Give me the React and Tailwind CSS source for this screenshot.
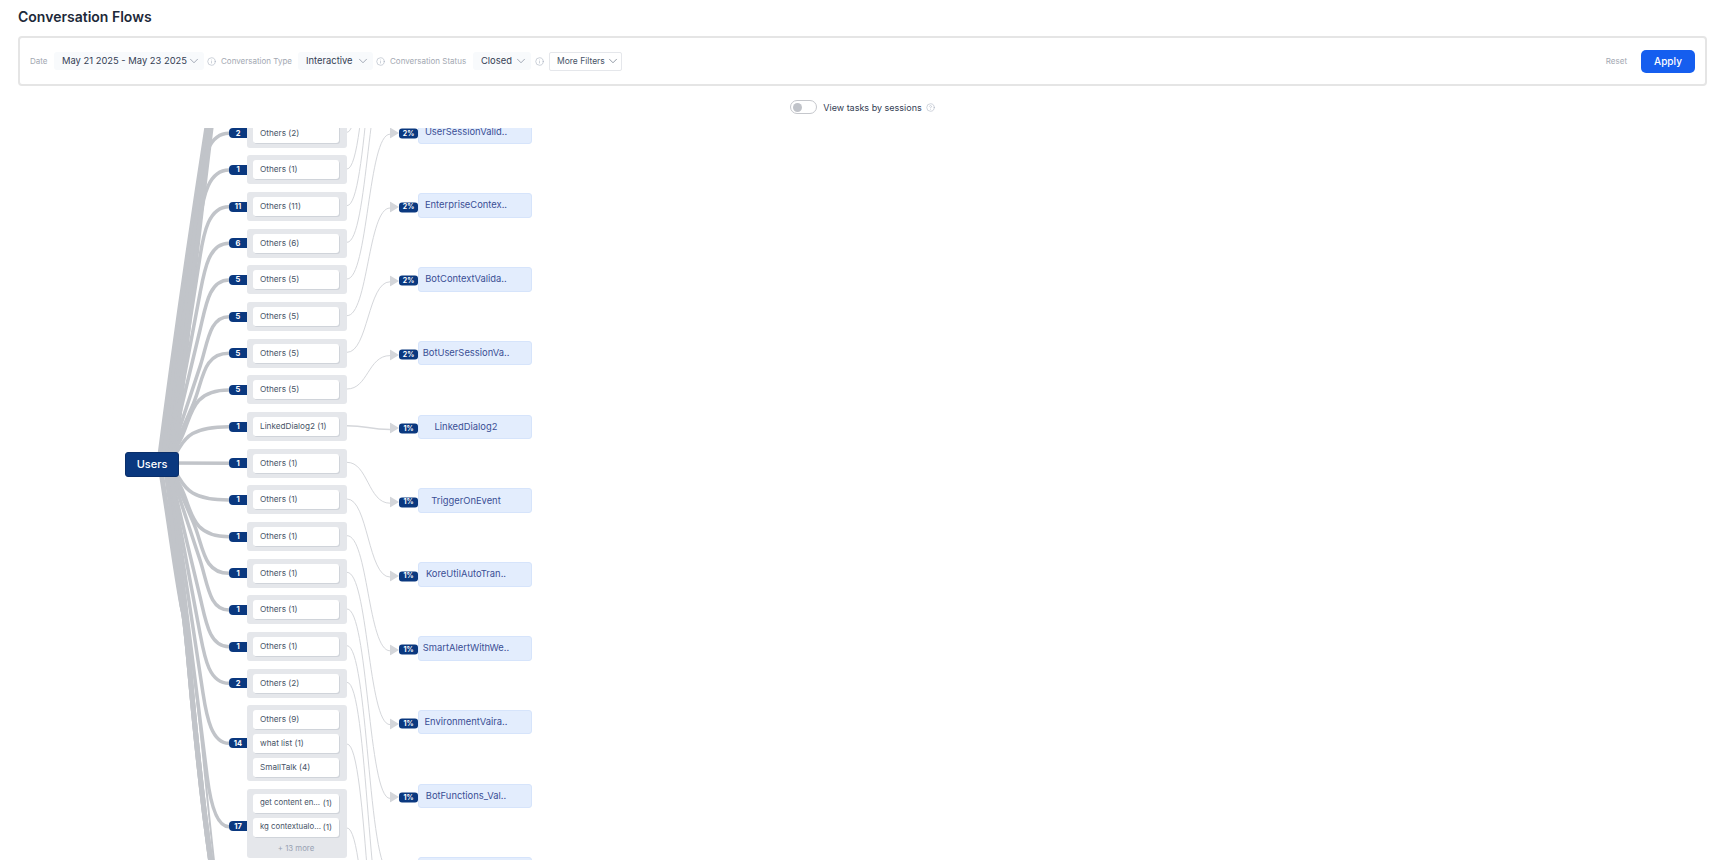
import React from 'react';
import { ChevronDown, Info, CircleHelp } from 'lucide-react';

const NODE_X = 229;
const EDGE_Y = 463;

// row centres of the count column, pixel values on the page
const rowY = [...Array(16)].map((_, i) => 133.3 + 36.67 * i);
const nodeY = i => 133.2 + 73.8 * i;

// Users -> count badge: runs straight out of the box, then a short elbow into the badge
function userEdge(y1) {
  const d = y1 - EDGE_Y;
  const abs = Math.abs(d);
  const s = Math.sign(d);
  if (abs < 4) return `M168 ${EDGE_Y} L${NODE_X} ${y1}`;
  const e = Math.min(50, abs * 0.75);
  const yk = y1 - s * e;
  const dist = Math.abs(yk - EDGE_Y);
  let xk = Math.min(200, 172 + dist * 0.36);
  if (s > 0) xk += Math.max(0, dist - 170) * 0.05;
  const len = Math.hypot(xk - 168, yk - EDGE_Y);
  const c1x = xk + ((xk - 168) / len) * e * 0.5;
  const c1y = yk + ((yk - EDGE_Y) / len) * e * 0.5;
  return `M168 ${EDGE_Y} L${xk} ${yk} C${c1x} ${c1y} ${xk + 9} ${y1} ${NODE_X} ${y1}`;
}

// card -> next step, plain horizontal link
const flowEdge = (y0, y1) => `M347 ${y0} C368 ${y0} 368 ${y1} 390 ${y1}`;

const flowLinks = [
  [0, -4], [1, -3], [2, -2], [3, -1], [4, 0], [5, 1], [6, 2], [7, 3], [8, 4],
  [9, 5], [10, 6], [11, 7], [12, 8], [13, 9], [14, 10], [15, 11],
];

const rows = [
  { n: 2, items: ['Others (2)'] },
  { n: 1, items: ['Others (1)'] },
  { n: 11, items: ['Others (11)'] },
  { n: 6, items: ['Others (6)'] },
  { n: 5, items: ['Others (5)'] },
  { n: 5, items: ['Others (5)'] },
  { n: 5, items: ['Others (5)'] },
  { n: 5, items: ['Others (5)'] },
  { n: 1, items: ['LinkedDialog2 (1)'] },
  { n: 1, items: ['Others (1)'] },
  { n: 1, items: ['Others (1)'] },
  { n: 1, items: ['Others (1)'] },
  { n: 1, items: ['Others (1)'] },
  { n: 1, items: ['Others (1)'] },
  { n: 1, items: ['Others (1)'] },
  { n: 2, items: ['Others (2)'] },
];

const steps = [
  ['2%', 'UserSessionValid..'],
  ['2%', 'EnterpriseContex..'],
  ['2%', 'BotContextValida..'],
  ['2%', 'BotUserSessionVa..'],
  ['1%', 'LinkedDialog2'],
  ['1%', 'TriggerOnEvent'],
  ['1%', 'KoreUtilAutoTran..'],
  ['1%', 'SmartAlertWithWe..'],
  ['1%', 'EnvironmentVaira..'],
  ['1%', 'BotFunctions_Val..'],
  ['1%', ''],
];

function Select({ text, className }) {
  return (
    <div className={`h-[18px] rounded-[3px] bg-[#f8fafc] flex items-center justify-between pl-2 pr-[3px] text-[9.4px] text-[#344054] ${className}`}>
      <span className="whitespace-nowrap">{text}</span>
      <ChevronDown size={14} strokeWidth={1} className="text-[#667085]" />
    </div>
  );
}

const Label = ({ children, className }) => (
  <span className={`text-[8px] text-[#a3a8b2] whitespace-nowrap ${className}`}>{children}</span>
);

const Hint = ({ className }) => <Info size={9} strokeWidth={1.3} className={`text-[#98a2b3] shrink-0 ${className}`} />;

function Pill({ children, between }) {
  return (
    <div className={`h-[19px] w-[86px] shrink-0 rounded-[3px] bg-white shadow-[1px_1px_0_#d0d4da] pl-[7px] pr-[7px] pb-[1px] flex items-center text-[8.2px] text-[#475467] whitespace-nowrap ${between ? 'justify-between' : ''}`}>
      {children}
    </div>
  );
}

function CountBadge({ n, className = '' }) {
  return (
    <div className={`w-[18px] h-[10px] shrink-0 rounded-l-[4px] bg-[#0a387f] text-white text-[7.5px] font-bold flex items-center justify-center ${className}`}>
      {n}
    </div>
  );
}

export default function App() {
  return (
    <div className="w-[1719px] h-[860px] overflow-hidden bg-white font-['Inter',sans-serif]">
      <h1 className="pl-[18px] pt-[8px] h-[36px] text-[14px] leading-[18px] font-semibold text-[#1d2939]">Conversation Flows</h1>

      {/* Filters */}
      <div className="ml-[18px] mr-[12px] h-[50px] border-2 border-[#e5e5e5] rounded-[4px] flex items-center pl-[10px] pr-[10px]">
        <Label className="w-[24px]">Date</Label>
        <Select text="May 21 2025 - May 23 2025" className="w-[150px]" />
        <Hint className="ml-[3px]" />
        <Label className="ml-[5px] w-[77px]">Conversation Type</Label>
        <Select text="Interactive" className="w-[75px]" />
        <Hint className="ml-[3px]" />
        <Label className="ml-[5px] w-[83px]">Conversation Status</Label>
        <Select text="Closed" className="w-[58px]" />
        <Hint className="ml-[4px]" />
        <div className="ml-[5px] w-[73px] h-[19px] border border-[#e5e7eb] rounded-[2px] flex items-center justify-between pl-[7px] pr-[1px] text-[8.5px] text-[#475467]">
          <span className="whitespace-nowrap">More Filters</span>
          <ChevronDown size={14} strokeWidth={1} className="text-[#475467]" />
        </div>
        <span className="ml-auto text-[8px] text-[#a3a8b2]">Reset</span>
        <button className="ml-[14px] w-[54px] h-[23px] rounded-[5px] bg-[#155eef] text-white text-[10px] font-medium">Apply</button>
      </div>

      {/* Sessions toggle */}
      <div className="ml-[18px] mr-[12px] mt-[14px] h-[14px] mb-[14px] flex items-center justify-center">
        <div className="w-[27px] h-[14px] rounded-full border border-[#c5c7cc] flex items-center pl-[2px]">
          <div className="w-[9px] h-[9px] rounded-full bg-[#c0c3c9]" />
        </div>
        <span className="ml-[6px] mt-[1px] text-[9px] text-[#344054] whitespace-nowrap">View tasks by sessions</span>
        <CircleHelp size={9} strokeWidth={1.2} className="ml-[4px] mt-[1px] text-[#98a2b3]" />
      </div>

      {/* Flow diagram */}
      <div className="relative h-[732px] overflow-hidden flex items-start">
        <svg className="absolute left-0 top-0" width="1719" height="732" viewBox="0 128 1719 732" fill="none">
          {/* rows above and below the visible part */}
          {[[158, 208], [162, 209], [166, 210], [170, 211], [174, 212]].map(([a, b]) => (
            <path key={a} d={`M${a} 470 Q${(a + b) / 2 - 3} 300 ${b} 120`} stroke="#c1c4c9" strokeWidth="5" />
          ))}
          {[160, 165, 170].map(a => (
            <path key={a} d={`M${a} 465 C${a + 12} 540 178 590 183 610 S193 740 212 870`} stroke="#c1c4c9" strokeWidth="5" />
          ))}
          <path d="M172 460 C180 560 190 640 197 700 S206 790 215 870" stroke="#c1c4c9" strokeWidth="2" />
          <path d={userEdge(826.7)} stroke="#c1c4c9" strokeWidth="3.5" />
          <path d={userEdge(743.3)} stroke="#c1c4c9" strokeWidth="3.5" />
          {rowY.map((y, i) => (
            <path key={i} d={userEdge(y)} stroke="#c1c4c9" strokeWidth="3.5" />
          ))}

          {flowLinks.map(([r, n]) => (
            <path key={r} d={flowEdge(rowY[r] - 1, nodeY(n) + 1)} stroke="#d5d7db" strokeWidth={r === 8 ? 1.5 : 1} />
          ))}
          <path d={flowEdge(744, nodeY(12))} stroke="#d5d7db" />
          <path d={flowEdge(828, nodeY(13))} stroke="#d5d7db" />
        </svg>

        <div className="absolute left-[125px] top-[323.5px] z-10 w-[54px] h-[25px] rounded-[3px] bg-[#0a387f] border border-[#0a2f6a] text-white text-[11px] font-medium flex items-center justify-center">
          Users
        </div>

        {/* Count + card column */}
        <div className="relative z-10 ml-[229px] -mt-[9.2px] flex flex-col gap-[7.67px] shrink-0">
          {rows.map((r, i) => (
            <div key={i} className="flex items-center">
              <CountBadge n={r.n} />
              <div className="w-[100px] h-[29px] rounded-[3px] bg-[#e5e7eb] flex items-center pl-[6px]">
                <Pill>{r.items[0]}</Pill>
              </div>
            </div>
          ))}
          <div className="flex items-center">
            <CountBadge n={14} />
            <div className="w-[100px] rounded-[3px] bg-[#e5e7eb] pl-[6px] pt-[5px] pb-[4px] flex flex-col gap-[5px]">
              <Pill>Others (9)</Pill>
              <Pill>what list (1)</Pill>
              <Pill>SmallTalk (4)</Pill>
            </div>
          </div>
          <div className="flex items-center">
            <CountBadge n={17} className="translate-y-[3px]" />
            <div className="w-[100px] h-[69px] rounded-[3px] bg-[#e5e7eb] pl-[6px] pt-[5px] flex flex-col gap-[5px]">
              <Pill between><span className="text-[7.8px]">get content en...</span><span>(1)</span></Pill>
              <Pill between><span className="text-[7.8px]">kg contextualo...</span><span>(1)</span></Pill>
              <div className="w-[86px] pt-[1px] text-center text-[7.8px] leading-[11px] text-[#98a2b3]">+ 13 more</div>
            </div>
          </div>
        </div>

        {/* Next step column */}
        <div className="relative z-10 ml-[43px] -mt-[8.5px] flex flex-col gap-[49.3px] shrink-0">
          {steps.map(([pct, name], i) => (
            <div key={i} className="flex items-center">
              <div className="flex items-center translate-y-[1.5px]">
                <svg width="9" height="11" viewBox="0 0 9 11"><path d="M0 0 L9 5.5 L0 11 Z" fill="#d4d6da" /></svg>
                <div className="w-[19px] h-[10px] rounded-[3px] bg-[#0a387f] text-white text-[7px] font-bold flex items-center justify-center">{pct}</div>
              </div>
              <div className="w-[114px] h-[24.5px] rounded-[3px] bg-[#e3edfd] border border-[#d6e4fb] pr-[18px] flex items-center justify-center text-[9.4px] text-[#3a4f95] whitespace-nowrap">
                {name}
              </div>
            </div>
          ))}
        </div>
      </div>
    </div>
  );
}
